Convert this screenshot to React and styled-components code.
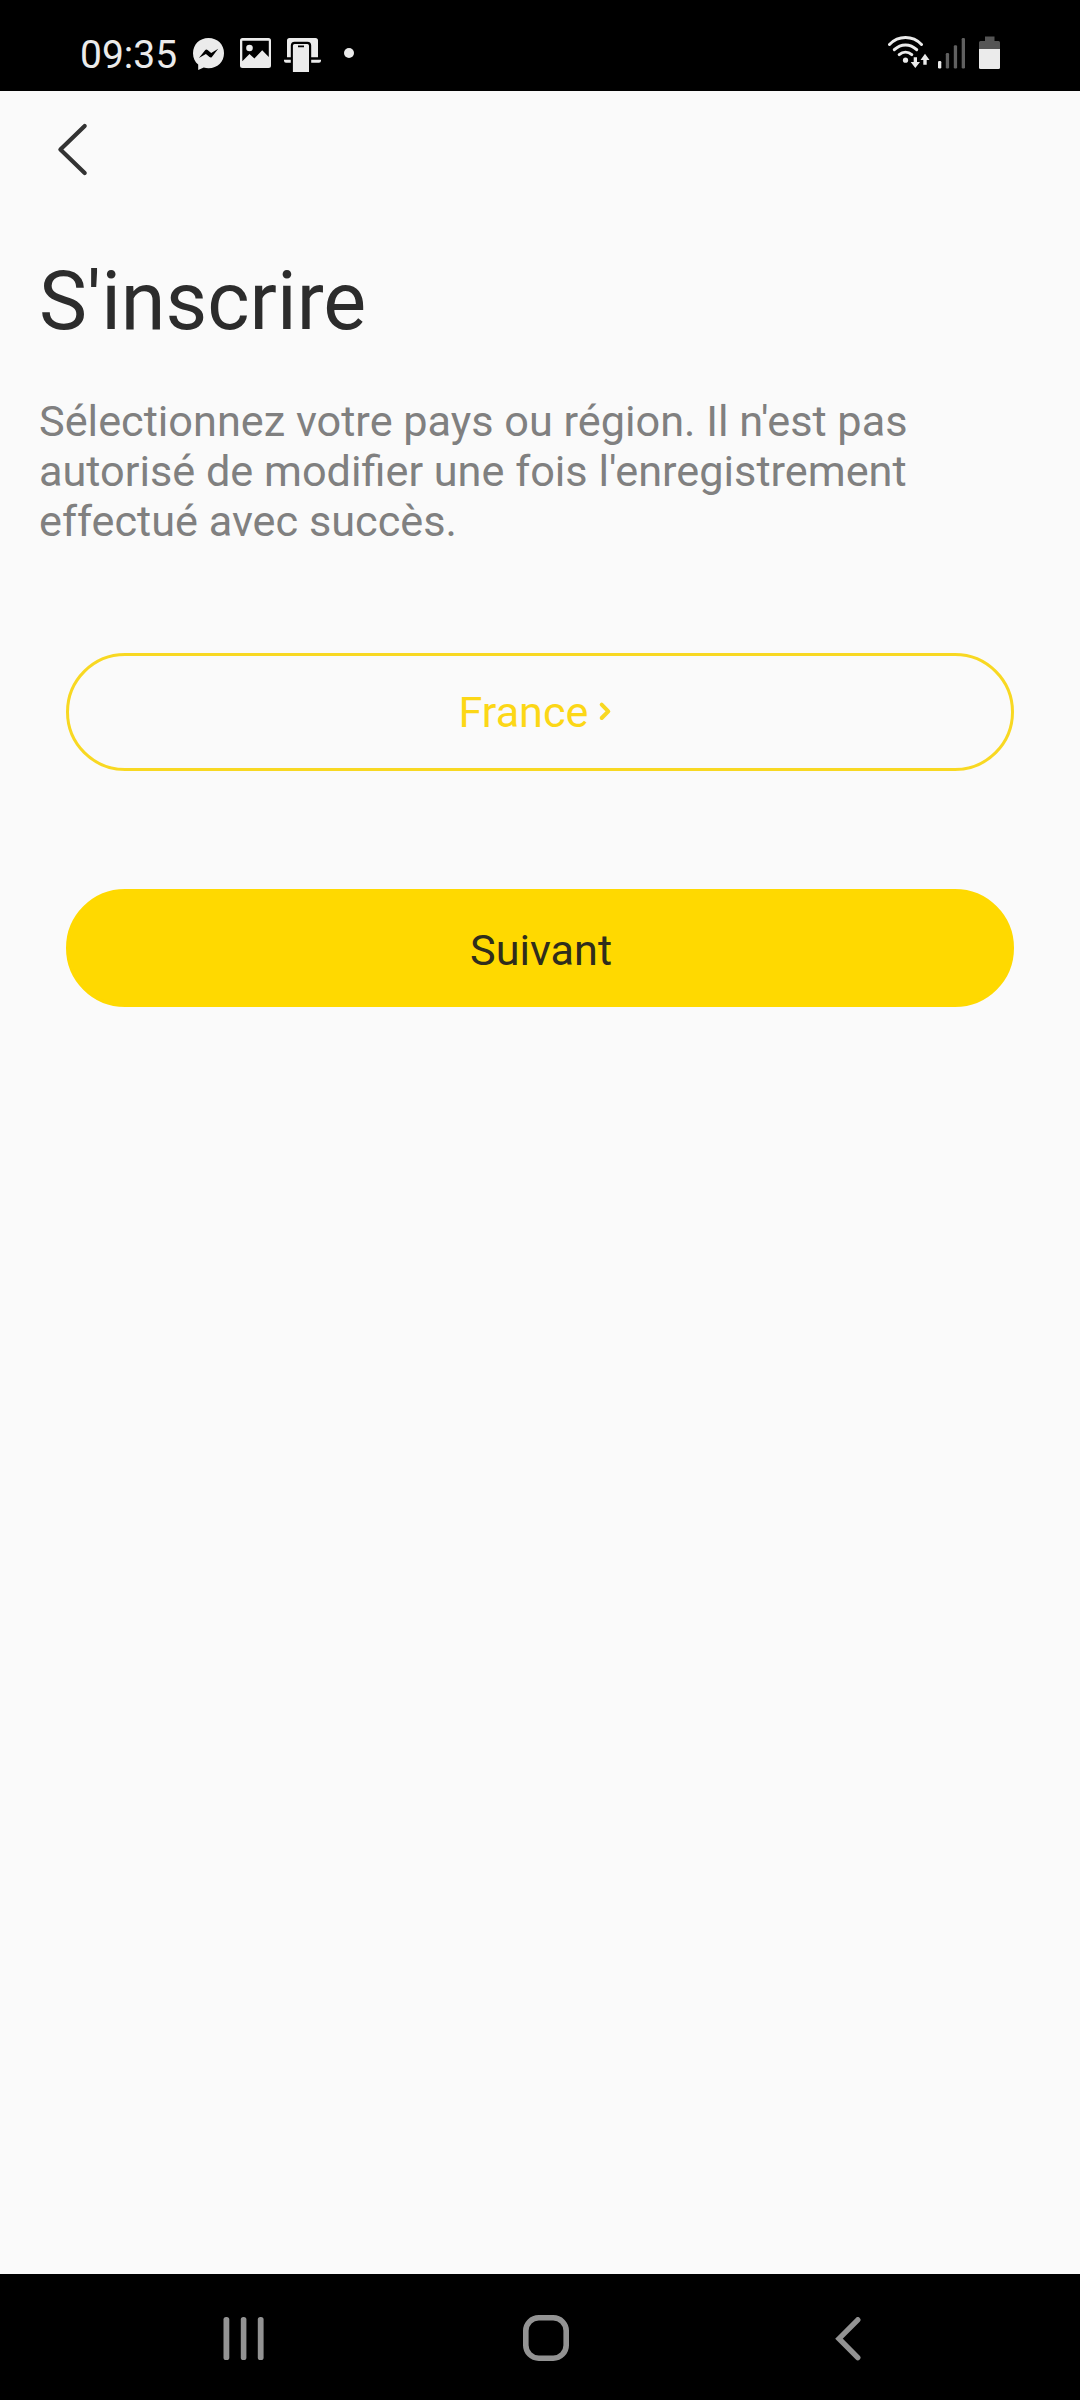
import React from "react";
import styled, { createGlobalStyle } from "styled-components";

const GlobalStyle = createGlobalStyle`
  *, *::before, *::after { box-sizing: border-box; }
  html, body { margin: 0; padding: 0; background: #fafafa; }
  body { font-family: Roboto, "Noto Sans", sans-serif; }
  button { font: inherit; margin: 0; cursor: pointer; }
  svg { display: block; flex: none; }
`;

const Screen = styled.div`
  display: flex;
  flex-direction: column;
  width: 1080px;
  height: 2400px;
  background: #fafafa;
`;

const StatusBar = styled.header`
  display: flex;
  justify-content: space-between;
  height: 91px;
  flex: none;
  padding: 31px 79px 0 80px;
  background: #000;
  color: #ebebeb;
`;

const StatusGroup = styled.div`
  display: flex;
  align-items: flex-start;
`;

const Clock = styled.time`
  width: 112px;
  font-size: 39px;
  line-height: 48px;
`;

const Main = styled.main`
  display: flex;
  flex-direction: column;
  flex: 1;
  padding: 0 39px;
`;

const BackButton = styled.button`
  display: flex;
  width: 72px;
  height: 117px;
  padding: 29px 0 0 17px;
  border: 0;
  background: none;
`;

const Title = styled.h1`
  margin: 46px 0 0;
  font-size: 80.9px;
  line-height: 96px;
  font-weight: 400;
  color: #2c2c2c;
`;

const Description = styled.p`
  margin: 47px 0 0;
  font-size: 43.26px;
  line-height: 50px;
  color: #808080;
`;

const Actions = styled.div`
  display: flex;
  flex-direction: column;
  gap: 118px;
  padding: 0 27px;
  margin-top: 106px;
`;

const PillButton = styled.button`
  display: flex;
  align-items: center;
  justify-content: center;
  gap: 10px;
  height: 118px;
  padding: 0;
  border: 3px solid ${(p) => (p.$filled ? "#ffd900" : "#f8d822")};
  border-radius: 59px;
  background: ${(p) => (p.$filled ? "#ffd900" : "transparent")};
  color: ${(p) => (p.$filled ? "#2f2d1c" : "#fcd716")};
  font-size: 43.2px;
  line-height: 50px;
`;

const Label = styled.span`
  padding-top: ${(p) => p.$drop || 0}px;
  padding-left: ${(p) => p.$indent || 0}px;
`;

const NavBar = styled.nav`
  display: flex;
  height: 126px;
  flex: none;
  padding: 0 80px 0 93px;
  background: #000;
`;

const NavButton = styled.button`
  display: flex;
  align-items: center;
  justify-content: center;
  flex: 1;
  padding: 4px 0 0;
  border: 0;
  background: none;
  color: #939393;
`;

const NotificationIcons = () => (
  <svg width="172" height="46" viewBox="192 31 172 46" fill="#ebebeb">
    <path d="M208.5 38C199.5 38 193 44.600 193 53.200C193 58 195 62 198.200 64.600V70L203.700 67.500C205.300 68 206.900 68.200 208.500 68.200C217.500 68.200 224 61.600 224 53.200C224 44.600 217.500 38 208.500 38Z" />
    <path d="M198.900 57.900L205.100 50.200Q206.200 49 207.600 50L211.200 53.100L218.200 48.700L211.900 56.900Q210.900 58.100 209.500 57.100L205.900 54.100Z" fill="#000" />
    <path fillRule="evenodd" d="M242.500 38H268.500Q271 38 271 40.500V65.500Q271 68 268.500 68H242.500Q240 68 240 65.500V40.500Q240 38 242.500 38ZM242.300 40.700V61.200L249.500 54L254.400 58.400L262.200 50.300L268.800 57V40.700Z" />
    <circle cx="249.500" cy="48" r="3.300" />
    <path d="M289.500 38H315.500Q318 38 318 40.500V57.200H311.200V45.500Q311.200 41.700 307.400 41.700H294.600Q290.800 41.700 290.800 45.500V57.200H287V40.500Q287 38 289.500 38Z" />
    <path d="M284 59.800H290.800V62.700H286Q284 62.700 284 60.700ZM311.200 59.800H321V60.700Q321 62.700 319 62.700H311.200Z" />
    <path fillRule="evenodd" d="M294.600 44H307.300Q309 44 309 45.700V72H292.900V45.700Q292.900 44 294.600 44ZM298 45.500V47.300H304V45.500Z" />
    <circle cx="349" cy="53" r="5" />
  </svg>
);

const ConnectivityIcons = () => (
  <svg width="113" height="46" viewBox="888 31 113 46" fill="#ebebeb">
    <g fill="none" stroke="#ebebeb" strokeWidth="3" strokeLinecap="round">
      <path d="M889.500 44.500C898.500 35.300 912.500 35.300 921.500 44.500" />
      <path d="M894.300 49.700C901 43.300 910 43.300 916.700 49.700" />
      <path d="M899.200 54.600C903 51.400 908 51.400 911.800 54.600" />
    </g>
    <circle cx="905.500" cy="60.200" r="2.600" />
    <path d="M913.700 57.300H917V62H920L915.300 68L910.700 62H913.700Z" />
    <path d="M923.300 64.800H926.700V60H929.500L925 53.800L920.500 60H923.300Z" />
    <rect x="938" y="61" width="3.300" height="7.500" rx="1.200" />
    <g fill="#606060">
      <rect x="945.800" y="53" width="3.300" height="15.500" rx="1.200" />
      <rect x="953.800" y="45.300" width="3.300" height="23.200" rx="1.200" />
      <rect x="961.700" y="38" width="3.300" height="30.500" rx="1.200" />
    </g>
    <path d="M985 36.500H994.500V41H998.500Q1000 41 1000 42.500V50H979V42.500Q979 41 980.500 41H985Z" fill="#555" />
    <path d="M979 49H1000V67.500Q1000 69 998.500 69H980.500Q979 69 979 67.500Z" />
  </svg>
);

export default function App() {
  return (
    <>
      <GlobalStyle />
      <Screen>
        <StatusBar>
          <StatusGroup>
            <Clock>09:35</Clock>
            <NotificationIcons />
          </StatusGroup>
          <StatusGroup>
            <ConnectivityIcons />
          </StatusGroup>
        </StatusBar>
        <Main>
          <BackButton aria-label="Retour">
            <svg width="34" height="58" viewBox="56 120 34 58" fill="none" stroke="#333" strokeWidth="4.200" strokeLinecap="round" strokeLinejoin="round">
              <path d="M84.700 126L60.400 149.500L84.700 173" />
            </svg>
          </BackButton>
          <Title>S'inscrire</Title>
          <Description>
            Sélectionnez votre pays ou région. Il n'est pas
            <br />
            autorisé de modifier une fois l'enregistrement
            <br />
            effectué avec succès.
          </Description>
          <Actions>
            <PillButton>
              <Label $drop={1}>France</Label>
              <svg width="23" height="22" viewBox="598 701 23 22" fill="none" stroke="#f8d822" strokeWidth="4" strokeLinecap="round" strokeLinejoin="round">
                <path d="M601.700 704.700L608.300 711.300L601.700 718" />
              </svg>
            </PillButton>
            <PillButton $filled>
              <Label $drop={5} $indent={2}>Suivant</Label>
            </PillButton>
          </Actions>
        </Main>
        <NavBar>
          <NavButton aria-label="Applications récentes">
            <svg width="42" height="44" viewBox="0 0 42 44" fill="currentColor">
              <rect x="0.500" y="0" width="5.800" height="43" rx="2.600" />
              <rect x="17.800" y="0" width="5.600" height="43" rx="2.600" />
              <rect x="34.800" y="0" width="5.800" height="43" rx="2.600" />
            </svg>
          </NavButton>
          <NavButton aria-label="Accueil">
            <svg width="46" height="48" viewBox="0 0 46 48" fill="none" stroke="currentColor" strokeWidth="5.600">
              <rect x="2.800" y="2.800" width="40.400" height="40.400" rx="13" />
            </svg>
          </NavButton>
          <NavButton aria-label="Précédent">
            <svg width="27" height="44" viewBox="0 0 27 44" fill="none" stroke="currentColor" strokeWidth="5.400" strokeLinecap="round">
              <path d="M22.800 2.800L4 21.700L22.800 40.600" />
            </svg>
          </NavButton>
        </NavBar>
      </Screen>
    </>
  );
}
